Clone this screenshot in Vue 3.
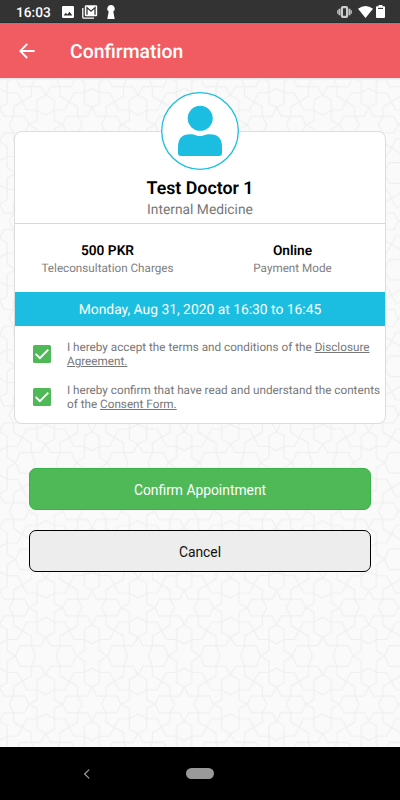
<template>
  <div class="screen">
    <header class="status">
      <span class="clock">16:03</span>
      <svg class="st-image" width="12" height="12" viewBox="0 0 12 12">
        <path fill="#fff" fill-rule="evenodd" d="M1.2 0h9.6Q12 0 12 1.2v9.6q0 1.2-1.2 1.2H1.2Q0 12 0 10.8V1.2Q0 0 1.2 0zM1.6 9.6h8.8L7.5 5.7 5.3 8.5 3.8 6.8z" />
      </svg>
      <svg class="st-mail" width="16" height="14" viewBox="0 0 16 14">
        <path d="M.8 3v9.2q0 1 1 1H12" fill="none" stroke="#fff" stroke-width="1.3" />
        <rect x="2.8" y=".3" width="12.4" height="11" rx="1.2" fill="#fff" />
        <path d="M5 9.8V2.6l4 3.6 4-3.6v7.2" fill="none" stroke="#333" stroke-width="1.3" />
      </svg>
      <svg class="st-key" width="10" height="14" viewBox="0 0 10 14">
        <path fill="#fff" d="M5 0a3.7 3.7 0 0 1 2.3 6.6L8.7 14H1.3l1.4-7.4A3.7 3.7 0 0 1 5 0z" />
      </svg>
      <span class="spacer"></span>
      <svg class="st-vibrate" width="15" height="12" viewBox="0 0 15 12">
        <path d="M.8 4.2v3.6M14.2 4.2v3.6" stroke="#bbb" stroke-width="1.4" />
        <path d="M2.5 2.8v6.4M12.5 2.8v6.4" stroke="#c4c4c4" stroke-width="1.9" />
        <rect x="4.9" y="1.1" width="5.2" height="9.8" rx="1" fill="#333" stroke="#ccc" stroke-width="2.2" />
      </svg>
      <svg class="st-wifi" width="15" height="12" viewBox="0 0 15 12">
        <path fill="#fff" d="M0 2.8Q7.5-2.6 15 2.8L7.5 12z" />
      </svg>
      <svg class="st-battery" width="9" height="13" viewBox="0 0 9 13">
        <path fill="#fff" d="M2.6 0h3.8v1.2H8q1 0 1 1V12q0 1-1 1H1q-1 0-1-1V2.2q0-1 1-1h1.6z" />
        <path d="M2 3.4h5" stroke="#333" stroke-width="1.1" />
      </svg>
    </header>

    <nav class="appbar">
      <svg width="16" height="16" viewBox="0 0 16 16">
        <path d="M15.6 8H1.4M8.2 1 1.2 8l7 7" fill="none" stroke="#fff" stroke-width="1.8" />
      </svg>
      <h1>Confirmation</h1>
    </nav>

    <main class="content">
      <!-- Girih pattern behind the page: one quarter cell mirrored four ways -->
      <svg class="girih" width="400" height="669">
        <defs>
          <path
            id="quarter"
            d="M0 56 26 70V101L0 116M0 56 15 31H77L91 0M43 31 31 0M43 31V59L96 91V119M26 101H57L85 49H116L138.5 36M91 0 116 16V80L138.5 93 125 119H63L51 144M96 119 110 144M26 101V131L51 144"
          />
          <pattern
            id="tiles"
            width="277"
            height="288"
            patternUnits="userSpaceOnUse"
            patternTransform="translate(45.7 -1.6) scale(.3333 .3354)"
          >
            <g fill="none" stroke="#efefef" stroke-width="3.6">
              <use href="#quarter" />
              <use href="#quarter" transform="translate(277 0) scale(-1 1)" />
              <use href="#quarter" transform="translate(0 288) scale(1 -1)" />
              <use href="#quarter" transform="translate(277 288) scale(-1 -1)" />
            </g>
          </pattern>
        </defs>
        <rect width="400" height="669" fill="url(#tiles)" />
      </svg>

      <section class="card">
        <div class="doctor">
          <svg class="avatar" width="78" height="78" viewBox="0 0 78 78">
            <circle cx="39" cy="39" r="38.3" fill="#fff" stroke="#1bbee0" stroke-width="1.3" />
            <circle cx="39.2" cy="26.3" r="12.5" fill="#1bbee0" />
            <path fill="#1bbee0" d="M17 61V55Q17 42.3 29 42.3C34 42.3 35 44 39 44S44 42.3 49 42.3Q61 42.3 61 55V61Q61 64 58 64H20Q17 64 17 61z" />
          </svg>
          <h2>Test Doctor 1</h2>
          <p>Internal Medicine</p>
        </div>

        <div class="facts">
          <div v-for="f in facts" :key="f.label" class="fact">
            <strong>{{ f.value }}</strong>
            <span>{{ f.label }}</span>
          </div>
        </div>

        <div class="slot">Monday, Aug 31, 2020 at 16:30 to 16:45</div>

        <div class="consents">
          <label v-for="c in consents" :key="c.link" class="consent">
            <button class="box" type="button" @click="c.checked = !c.checked">
              <svg v-if="c.checked" width="18" height="18" viewBox="0 0 18 18">
                <path d="M2.6 8.9 6.9 13.1 15.3 4.6" fill="none" stroke="#fff" stroke-width="1.9" />
              </svg>
            </button>
            <span>
              {{ c.first }}<br v-if="c.breakText" />{{ c.breakText }}
              <u>{{ c.link }}<template v-if="c.linkRest"><br />{{ c.linkRest }}</template></u>
            </span>
          </label>
        </div>
      </section>

      <div class="actions">
        <button class="btn confirm" type="button">Confirm Appointment</button>
        <button class="btn cancel" type="button">Cancel</button>
      </div>
    </main>

    <footer class="navbar">
      <svg width="8" height="12" viewBox="0 0 8 12">
        <path d="M6.2 1.6 1.6 6l4.6 4.4" fill="none" stroke="#999" stroke-width="1.3" />
      </svg>
      <span class="pill"></span>
      <span></span>
    </footer>
  </div>
</template>

<script setup>
import { reactive } from 'vue'

const facts = [
  { value: '500 PKR', label: 'Teleconsultation Charges' },
  { value: 'Online', label: 'Payment Mode' },
]

const consents = reactive([
  {
    first: 'I hereby accept the terms and conditions of the',
    breakText: '',
    link: 'Disclosure',
    linkRest: 'Agreement.',
    checked: true,
  },
  {
    first: 'I hereby confirm that have read and understand the contents',
    breakText: 'of the',
    link: 'Consent Form.',
    linkRest: '',
    checked: true,
  },
])
</script>

<style>
body { background: #fafafa; }
</style>

<style scoped>
.screen {
  width: 400px; height: 800px; display: flex; flex-direction: column;
  overflow: hidden; font-family: Roboto, sans-serif; background: #fafafa;
  text-rendering: geometricPrecision;
}
h1, h2, p { margin: 0; }
button { font-family: inherit; cursor: pointer; }

.status {
  height: 23px; box-sizing: border-box; flex: none; display: flex; align-items: center;
  padding: 1px 15px 0 16px; background: #333; border-bottom: 1px solid #1c3133;
}
.clock { width: 46px; padding-top: 2px; color: #fff; font-size: 13.7px; font-weight: 500; line-height: 16px; }
.st-mail { margin-left: 8px; }
.st-key { margin-left: 8px; }
.spacer { flex: 1; }
.st-wifi { margin-left: 6px; }
.st-battery { margin-left: 3px; }

.appbar {
  height: 55px; flex: none; display: flex; align-items: center;
  padding-left: 19px; background: #f15c62;
}
.appbar h1 { margin: 2px 0 0 35px; color: #fff; font-size: 19.4px; font-weight: 500; }

.content { position: relative; flex: 1; padding: 53px 14px 0; box-shadow: inset 0 2px 2px -1px #ddd; }
.girih { position: absolute; left: 0; top: 0; }

.card {
  position: relative; height: 293px; box-sizing: border-box; background: #fff;
  border: 1px solid #dcdcdc; border-radius: 8px;
}
.doctor {
  height: 92px; box-sizing: border-box; border-bottom: 1px solid #d8d8d8;
  display: flex; flex-direction: column; align-items: center;
}
.avatar { flex: none; margin-top: -40px; }
.doctor h2 { margin-top: 8px; font-size: 17.8px; line-height: 22px; font-weight: 600; color: #000; }
.doctor p { margin-top: 1px; font-size: 13.8px; line-height: 18px; color: #777; }

.facts { height: 68px; display: flex; }
.fact { flex: 1; display: flex; flex-direction: column; align-items: center; padding-top: 18px; }
.fact strong { font-size: 13.7px; line-height: 18px; font-weight: 600; color: #000; }
.fact span { font-size: 11.7px; line-height: 16px; color: #808080; }

.slot {
  height: 34px; line-height: 37px; text-align: center; font-size: 13.85px;
  color: #fff; background: #1bbee0;
}

.consents { display: flex; flex-direction: column; gap: 16px; padding: 15px 0 0 18px; }
.consent { display: flex; align-items: flex-start; font-size: 11.72px; line-height: 13.5px; color: #777; white-space: nowrap; }
.box {
  width: 18px; height: 18px; flex: none; margin: 4px 16px 0 0; padding: 0;
  border: none; border-radius: 1.5px; background: #50b957;
}
.box svg { display: block; }

.actions { position: relative; display: flex; flex-direction: column; gap: 20px; padding: 44px 15px 0; }
.btn { height: 42px; box-sizing: border-box; border-radius: 7px; font-size: 13.85px; padding-top: 3px; }
.confirm { color: #fff; background: #50b957; border: 1px solid #37b34a; }
.cancel { color: #111; background: #ededed; border: 1px solid #000; }

.navbar {
  height: 53px; flex: none; display: grid; grid-template-columns: 1fr 28px 1fr;
  align-items: center; background: #000;
}
.navbar svg { margin-left: 83px; }
.pill { width: 28px; height: 11px; border-radius: 6px; background: #999; }
</style>
